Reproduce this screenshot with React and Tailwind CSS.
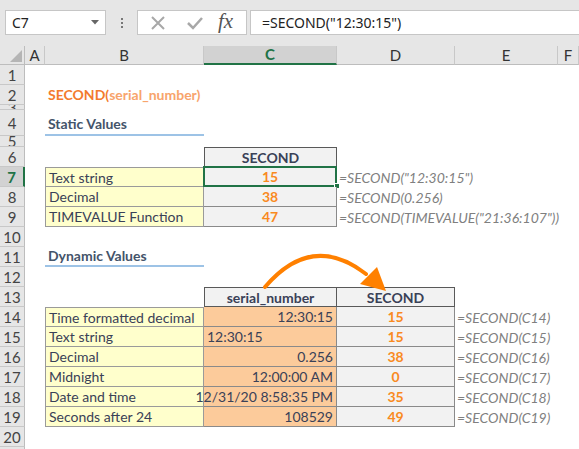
import React from "react"

// column widths: rowhead 25, A 20, B 159, C 133, D 118, E 103, F rest
const label = "text-[#3a4157]"
const orange = "text-[#f98a1f] font-bold"
const formula = "italic text-[#7f7f7f] whitespace-nowrap"

const Cell = ({ className = "", children }) => (
  <div className={`h-full shrink-0 flex items-center relative whitespace-nowrap ${className}`}>{children}</div>
)

const Row = ({ n, h = "h-[20px]", sel = false, children }) => (
  <div className={`flex ${h}`}>
    <div
      className={`w-[25px] shrink-0 h-full overflow-hidden flex items-center justify-center border-b border-[#c8c8c8] text-[15px] leading-[16px] ${
        sel
          ? "bg-[#d2d2d2] border-r-2 border-r-[#217346] text-[#217346] font-bold"
          : "bg-[#e6e6e6] border-r border-r-[#bdbdbd] text-[#444]"
      }`}
    >
      {n}
    </div>
    {children}
  </div>
)

const Toolbar = () => (
  <div className="h-[46px] bg-[#e6e6e6] flex items-start pt-[10px] pl-[5px] font-['Noto_Sans',sans-serif]">
    {/* name box */}
    <div className="w-[101px] h-[25px] bg-white border border-[#c6c6c6] flex items-center pl-[6px] pr-[6px] justify-between text-[14px] text-[#222]">
      <span>C7</span>
      <svg width="8" height="5" viewBox="0 0 8 5">
        <polygon points="0,0 8,0 4,4.5" fill="#666" />
      </svg>
    </div>
    {/* dots */}
    <div className="w-[31px] h-[25px] flex flex-col items-center justify-center gap-[2px]">
      <div className="w-[2px] h-[2px] bg-[#777]" />
      <div className="w-[2px] h-[2px] bg-[#777]" />
      <div className="w-[2px] h-[2px] bg-[#777]" />
    </div>
    {/* cancel / enter / fx */}
    <div className="w-[110px] h-[25px] bg-white border border-[#c6c6c6] flex items-center">
      <svg width="16" height="16" viewBox="0 0 16 16" className="ml-[12px]">
        <path d="M2 2 L14 14 M14 2 L2 14" stroke="#a8a8a8" strokeWidth="2" fill="none" />
      </svg>
      <svg width="18" height="16" viewBox="0 0 18 16" className="ml-[20px]">
        <path d="M2 8 L7 13 L16 3" stroke="#a8a8a8" strokeWidth="2.5" fill="none" />
      </svg>
      <span className="ml-[14px] text-[21px] leading-none italic text-[#555] font-['Liberation_Serif',serif] -mt-[3px]">
        fx
      </span>
    </div>
    {/* formula input */}
    <div className="ml-[3px] flex-1 h-[25px] bg-white border border-[#c6c6c6] border-r-0 flex items-center pl-[11px] text-[14px] text-[#222]">
      =SECOND("12:30:15")
    </div>
  </div>
)

const ColHeaders = () => {
  const hd = "h-full shrink-0 flex items-center justify-center border-r border-[#c8c8c8] border-b border-b-[#bdbdbd] text-[15px] text-[#333]"
  return (
    <div className="flex h-[19px] bg-[#e6e6e6]">
      <div className="w-[25px] shrink-0 h-full border-r border-b border-[#bdbdbd] relative">
        <svg width="25" height="19" className="absolute inset-0">
          <polygon points="10,16 22,16 22,4" fill="#b5b5b5" />
        </svg>
      </div>
      <div className={`${hd} w-[20px]`}>A</div>
      <div className={`${hd} w-[159px]`}>B</div>
      <div className="h-full shrink-0 w-[133px] flex items-center justify-center bg-[#d2d2d2] border-r border-[#c8c8c8] border-b-2 border-b-[#217346] text-[15px] text-[#217346] font-bold">
        C
      </div>
      <div className={`${hd} w-[118px]`}>D</div>
      <div className={`${hd} w-[103px]`}>E</div>
      <div className={`${hd} flex-1`}>F</div>
    </div>
  )
}

const A = "w-[20px]"
const Bw = "w-[159px]"
const Cw = "w-[133px]"
const Dw = "w-[118px]"

const yellowB = `${Bw} bg-[#ffffcc] border-l border-r border-b border-[#9a9a9a] pl-[3px] ${label}`
const grayC = `${Cw} bg-[#f2f2f2] border-r border-b border-[#8a8a8a] justify-center`
const peachC = `${Cw} bg-[#fccb9b] border-r border-b border-[#8a8a8a] ${label}`
const grayD = `${Dw} bg-[#f2f2f2] border-r border-b border-[#8a8a8a] justify-center`

const dynamic = [
  ["Time formatted decimal", "12:30:15", "right", "15", "=SECOND(C14)"],
  ["Text string", "12:30:15", "left", "15", "=SECOND(C15)"],
  ["Decimal", "0.256", "right", "38", "=SECOND(C16)"],
  ["Midnight", "12:00:00 AM", "right", "0", "=SECOND(C17)"],
  ["Date and time", "12/31/20 8:58:35 PM", "right", "35", "=SECOND(C18)"],
  ["Seconds after 24", "108529", "right", "49", "=SECOND(C19)"],
]

const App = () => {
  return (
    <div className="w-[579px] h-[449px] overflow-hidden bg-white relative font-['Lato',sans-serif] text-[14px]">
      <Toolbar />
      <ColHeaders />

      <Row n="1" />
      <Row n="2">
        <Cell className={A} />
        <Cell className={`${Bw} items-end pb-[2px] pl-[3px] font-bold leading-[16px]`}>
          <span className="text-[#f37b2d]">SECOND(</span>
          <span className="text-[#f8a46c]">serial_number)</span>
        </Cell>
      </Row>
      <Row n="3" h="h-[5px]" />
      <Row n="4" h="h-[26px]">
        <Cell className={A} />
        <Cell className={`${Bw} items-end pb-[2px] pl-[3px] font-bold leading-[16px] text-[#44546a] border-b-2 border-[#9dc3e6]`}>
          Static Values
        </Cell>
      </Row>
      <Row n="5" h="h-[11px]" />
      <Row n="6">
        <Cell className={A} />
        <Cell className={Bw} />
        <Cell className={`${Cw} bg-[#f2f2f2] border border-[#595959] justify-center font-bold text-[#3a4157]`}>
          SECOND
        </Cell>
      </Row>
      <Row n="7" sel>
        <Cell className={A} />
        <Cell className={`${yellowB} border-t`}>Text string</Cell>
        <Cell className={grayC}>
          <span className={orange}>15</span>
          <div className="absolute -left-[1px] -top-[1px] w-[134px] h-[21px] border-2 border-[#217346]" />
          <div className="absolute -right-[4px] -bottom-[3px] w-[6px] h-[6px] bg-[#217346] border border-white" />
        </Cell>
        <Cell className={`${Dw} pl-[2px] ${formula}`}>=SECOND("12:30:15")</Cell>
      </Row>
      <Row n="8">
        <Cell className={A} />
        <Cell className={yellowB}>Decimal</Cell>
        <Cell className={grayC}>
          <span className={orange}>38</span>
        </Cell>
        <Cell className={`${Dw} pl-[2px] ${formula}`}>=SECOND(0.256)</Cell>
      </Row>
      <Row n="9">
        <Cell className={A} />
        <Cell className={yellowB}>TIMEVALUE Function</Cell>
        <Cell className={grayC}>
          <span className={orange}>47</span>
        </Cell>
        <Cell className={`${Dw} pl-[2px] ${formula}`}>=SECOND(TIMEVALUE("21:36:107"))</Cell>
      </Row>
      <Row n="10" />
      <Row n="11">
        <Cell className={A} />
        <Cell className={`${Bw} items-end pb-[1px] pl-[3px] font-bold leading-[16px] text-[#44546a] border-b-2 border-[#9dc3e6]`}>
          Dynamic Values
        </Cell>
      </Row>
      <Row n="12" />
      <Row n="13">
        <Cell className={A} />
        <Cell className={Bw} />
        <Cell className={`${Cw} bg-[#f2f2f2] border border-[#595959] justify-center font-bold text-[#3a4157]`}>
          serial_number
        </Cell>
        <Cell className={`${Dw} bg-[#f2f2f2] border-t border-r border-b border-[#595959] justify-center font-bold text-[#3a4157]`}>
          SECOND
        </Cell>
      </Row>
      {dynamic.map((r, i) => (
        <Row key={i} n={String(14 + i)}>
          <Cell className={A} />
          <Cell className={`${yellowB} ${i === 0 ? "border-t" : ""}`}>{r[0]}</Cell>
          <Cell className={`${peachC} ${r[2] === "right" ? "justify-end pr-[3px]" : "pl-[3px]"}`}>
            {r[1]}
          </Cell>
          <Cell className={grayD}>
            <span className={orange}>{r[3]}</span>
          </Cell>
          <Cell className={`pl-[2px] ${formula}`}>{r[4]}</Cell>
        </Row>
      ))}
      <Row n="20" />
      <Row n="" />

      {/* curved arrow from serial_number to SECOND */}
      <svg className="absolute left-0 top-0 pointer-events-none" width="579" height="449" viewBox="0 0 579 449">
        <path d="M265 287 Q312 232 366 274" stroke="#ff8000" strokeWidth="4" fill="none" strokeLinecap="round" />
        <polygon points="360,284 377,267 386,291" fill="#ff8000" />
      </svg>
    </div>
  )
}

export default App
